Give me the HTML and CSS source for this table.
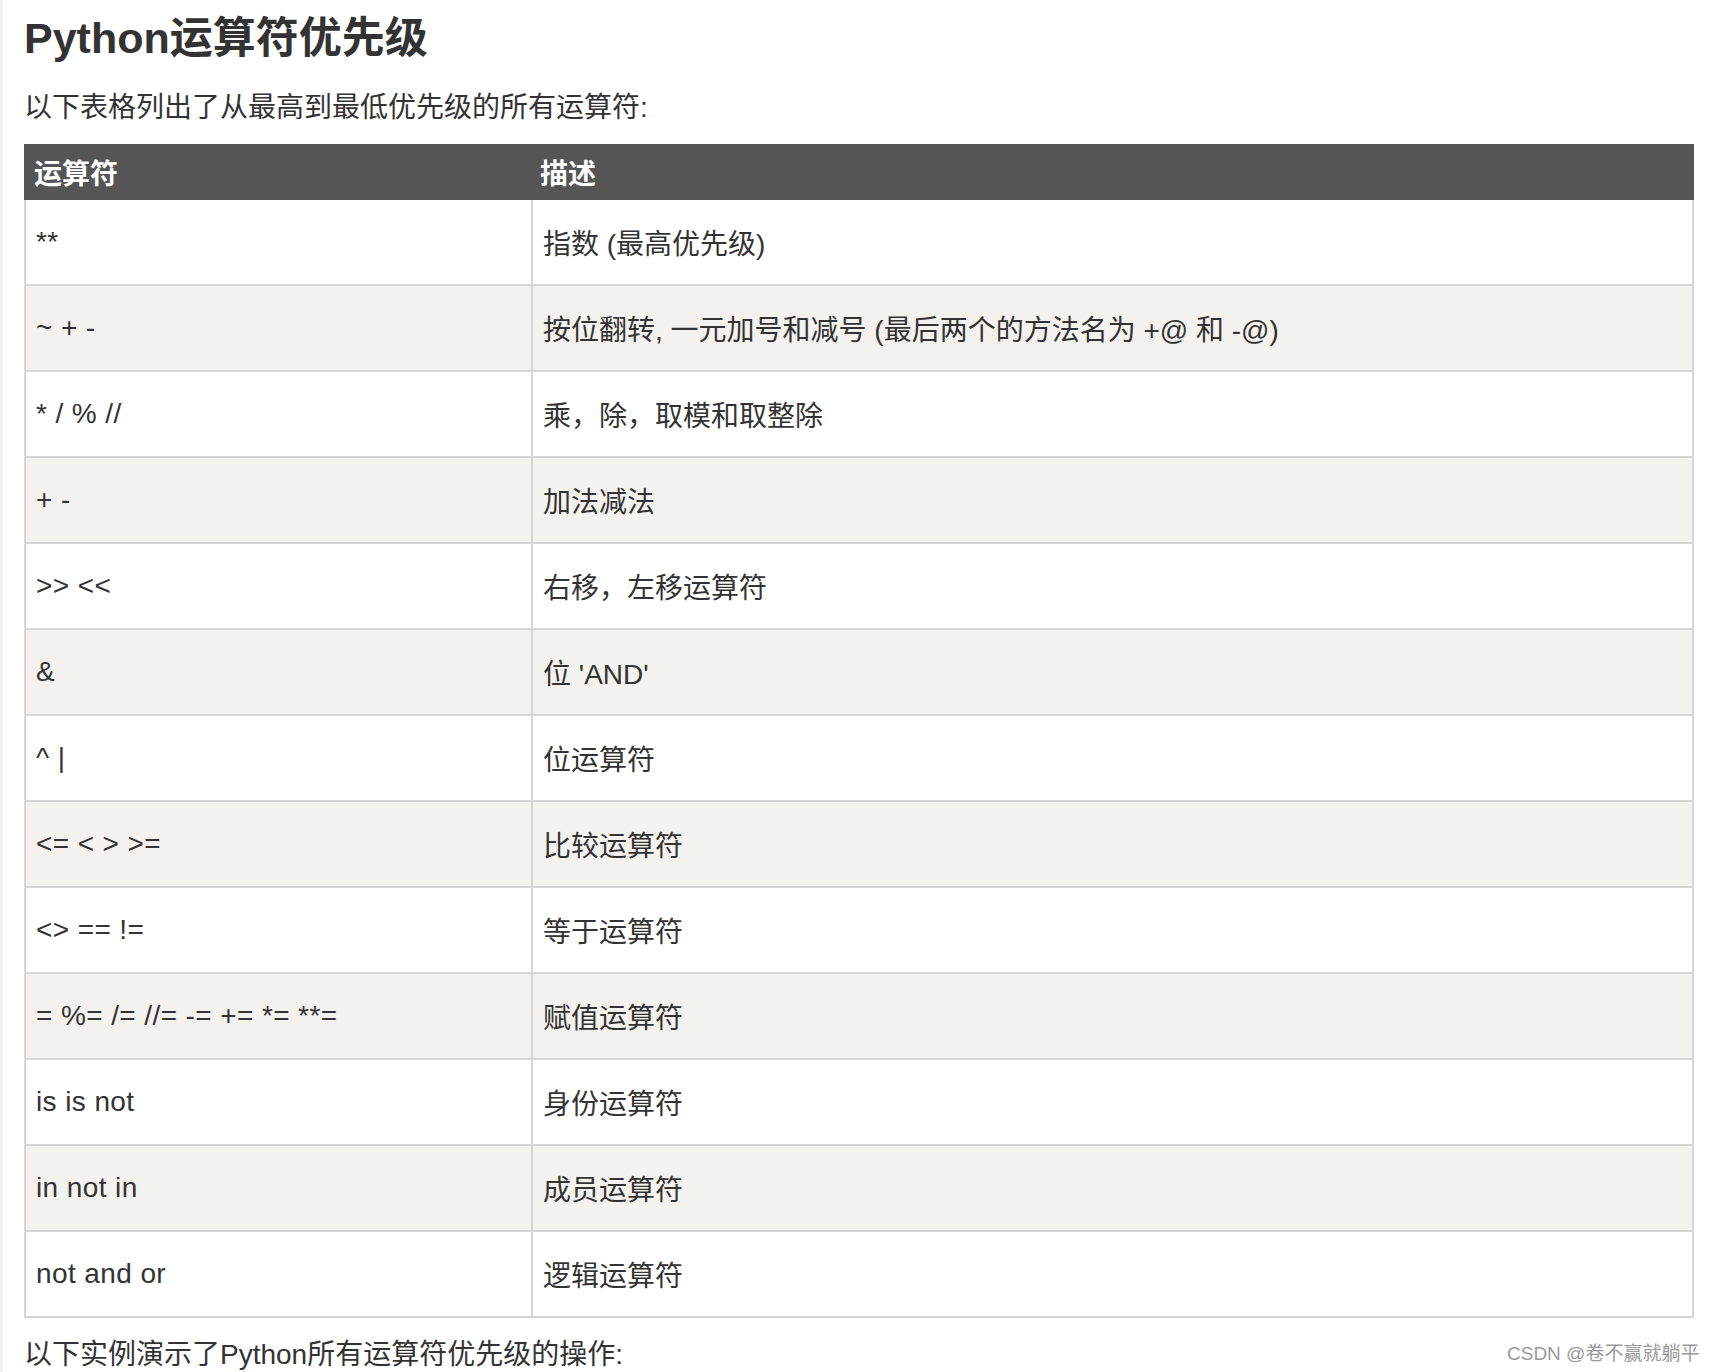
FILE: index.html
```html
<!DOCTYPE html>
<html lang="zh-CN">
<head>
<meta charset="utf-8">
<title>Python运算符优先级</title>
<link rel="stylesheet" href="styles.css">
</head>
<body>
<div class="page">
  <h1 class="title">Python运算符优先级</h1>
  <p class="lead">以下表格列出了从最高到最低优先级的所有运算符:</p>
  <table class="ops">
    <thead>
      <tr><th class="col-op">运算符</th><th class="col-desc">描述</th></tr>
    </thead>
    <tbody>
      <tr><td class="op">**</td><td>指数 (最高优先级)</td></tr>
      <tr><td class="op">~ + -</td><td>按位翻转, 一元加号和减号 (最后两个的方法名为 +@ 和 -@)</td></tr>
      <tr><td class="op">* / % //</td><td>乘，除，取模和取整除</td></tr>
      <tr><td class="op">+ -</td><td>加法减法</td></tr>
      <tr><td class="op">&gt;&gt; &lt;&lt;</td><td>右移，左移运算符</td></tr>
      <tr><td class="op">&amp;</td><td>位 'AND'</td></tr>
      <tr><td class="op">^ |</td><td>位运算符</td></tr>
      <tr><td class="op">&lt;= &lt; &gt; &gt;=</td><td>比较运算符</td></tr>
      <tr><td class="op">&lt;&gt; == !=</td><td>等于运算符</td></tr>
      <tr><td class="op">= %= /= //= -= += *= **=</td><td>赋值运算符</td></tr>
      <tr><td class="op">is is not</td><td>身份运算符</td></tr>
      <tr><td class="op">in not in</td><td>成员运算符</td></tr>
      <tr><td class="op">not and or</td><td>逻辑运算符</td></tr>
    </tbody>
  </table>
  <p class="lead after">以下实例演示了Python所有运算符优先级的操作:</p>
</div>
<div class="watermark">CSDN @卷不赢就躺平</div>
</body>
</html>
```

FILE: styles.css
```css
html, body {
  margin: 0;
  padding: 0;
  background: #ffffff;
}

body {
  font-family: "Liberation Sans", "Noto Sans CJK SC", sans-serif;
  color: #333333;
  height: 1372px;
  overflow: hidden;
  position: relative;
}

.page {
  border-left: 3px solid #f1f1f1;
  padding-left: 21px;
  width: 1670px;
  min-height: 1372px;
  box-sizing: content-box;
}

.title {
  margin: 0;
  padding-top: 8px;
  font-size: 43px;
  line-height: 60px;
  font-weight: bold;
  color: #333333;
}

.lead {
  margin: 20px 0 0 0;
  font-size: 28px;
  line-height: 40px;
  color: #333333;
}

.lead.after {
  margin-top: 17px;
}

.ops {
  margin-top: 16px;
  width: 1670px;
  border-collapse: collapse;
  table-layout: fixed;
  font-size: 28px;
}

.ops th {
  background: #555555;
  color: #ffffff;
  font-weight: bold;
  text-align: left;
  height: 52px;
  padding: 0 8px;
  border: 2px solid #555555;
}

.ops .col-op {
  width: 489px;
}

.ops .col-desc {
  padding-left: 7px;
}

.ops td {
  height: 84px;
  padding: 0 10px;
  border: 2px solid #d5d5d5;
  vertical-align: middle;
}

.ops td.op {
  letter-spacing: 0.4px;
}

.ops tbody tr:nth-child(even) td {
  background: #f3f2ee;
}

.watermark {
  position: absolute;
  left: 1507px;
  top: 1340px;
  font-size: 19px;
  line-height: 28px;
  color: #9a9a9a;
  text-shadow: 0 0 1px #ffffff;
  white-space: nowrap;
}
```
